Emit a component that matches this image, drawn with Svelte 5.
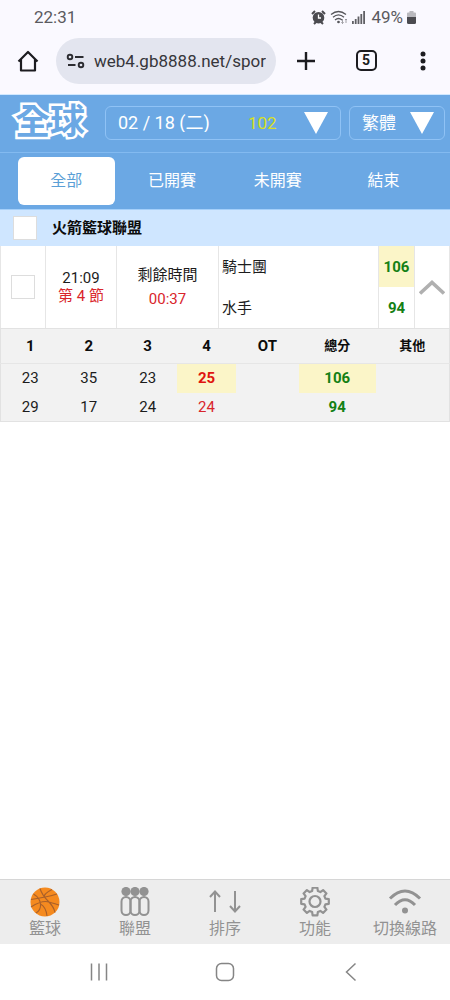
<script>
  let url = 'web4.gb8888.net/sport';
  let fecha = '0218';
  let idioma = 'tw';
  let activeTab = 0;
  let abierto = true;

  const tabs = ['全部', '已開賽', '未開賽', '結束'];

  const headers = ['1', '2', '3', '4', 'OT', '總分', '其他'];
  const widths = [59, 59, 59, 59, 63, 77, 74];

  const rows = [
    { scores: ['23', '35', '23', '25', '', '106', ''], scoring: true },
    { scores: ['29', '17', '24', '24', '', '94', ''], scoring: false }
  ];

  const menu = [
    { icon: 'ball', label: '籃球' },
    { icon: 'league', label: '聯盟' },
    { icon: 'sort', label: '排序' },
    { icon: 'gear', label: '功能' },
    { icon: 'wifi', label: '切換線路' }
  ];

  // Gear outline with eight teeth
  function gearPath(cx, cy, outer, inner) {
    const pts = [];
    for (let i = 0; i < 8; i++) {
      const a = (i * Math.PI) / 4 - Math.PI / 2;
      for (const [off, r] of [[-0.27, inner], [-0.17, outer], [0.17, outer], [0.27, inner]]) {
        pts.push(`${(cx + r * Math.cos(a + off)).toFixed(2)} ${(cy + r * Math.sin(a + off)).toFixed(2)}`);
      }
    }
    return 'M' + pts.join('L') + 'Z';
  }
</script>

<div class="screen">
  <div class="status">
    <span class="clock">22:31</span>
    <div class="status-icons">
      <svg width="15" height="15" viewBox="0 0 15 15">
        <path d="M1 4 4 1M14 4 11 1M3 14l2-2M12 14l-2-2" stroke="#4b4b50" stroke-width="2" />
        <circle cx="7.5" cy="7.7" r="5.8" fill="#4b4b50" />
        <path d="M7.5 4.5V8H10" fill="none" stroke="#fff" stroke-width="1.3" />
      </svg>
      <svg width="18" height="15" viewBox="0 0 18 15" fill="none" stroke="#55555a" stroke-width="1.3">
        <path d="M1 4.5Q8.500-1.500 16 4.500M3 7.300Q8.500 2.500 14 7.300M5 10Q8.500 7 12 10" />
        <circle cx="8.500" cy="12" r=".7" fill="#55555a" />
        <path d="M12.500 9v4.500m-1.200-1.200 1.200 1.200 1.200-1.200M16 13V9m-1 1 1-1 1 1" stroke="#8b8b90" stroke-width=".8" />
      </svg>
      <svg class="signal" width="13" height="13" viewBox="0 0 13 13" fill="#606065">
        <path d="M0 10h1.800v3H0zM2.800 8h1.800v5H2.800zM5.600 5.500h1.800V13H5.600zM8.400 3h1.800v10H8.400zM11.200 0H13v13h-1.800z" />
      </svg>
      <span>49%</span>
      <svg width="9" height="13" viewBox="0 0 9 13">
        <path d="M2.500 0h4v1.500H8q1 0 1 1V6H0V2.500q0-1 1-1h1.500z" fill="#b9b9be" />
        <path d="M0 6h9v5.500q0 1.500-1.500 1.500h-6Q0 13 0 11.500z" fill="#4b4b50" />
      </svg>
    </div>
  </div>

  <div class="browser">
    <button class="home" aria-label="Home">
      <svg width="24" height="24" viewBox="0 0 24 24" fill="none" stroke="#1c1c20" stroke-width="2.200">
        <path d="M2.500 12.500 12 3l9.500 9.500M5 10.500V21.500h14V10.500" stroke-linejoin="round" />
      </svg>
    </button>
    <div class="address">
      <svg width="20" height="16" viewBox="0 0 20 16" fill="none" stroke="#2c2c31" stroke-width="1.900">
        <circle cx="4" cy="4" r="2.300" /><path d="M9 4h8.500M2 12h7.500" /><circle cx="15" cy="12" r="2.300" />
      </svg>
      <input type="text" aria-label="URL" bind:value={url} />
    </div>
    <button class="tool" aria-label="New tab">
      <svg width="20" height="20" viewBox="0 0 20 20" stroke="#1c1c20" stroke-width="2.400"><path d="M1 10h18M10 1v18" /></svg>
    </button>
    <button class="tool"><span class="count">5</span></button>
    <button class="tool last" aria-label="Menu">
      <svg width="6" height="20" viewBox="0 0 6 20" fill="#1c1c20"><circle cx="3" cy="3" r="2.500" /><circle cx="3" cy="10" r="2.500" /><circle cx="3" cy="17" r="2.500" /></svg>
    </button>
  </div>

  <header>
    <div class="top">
      <div class="logo">全球</div>
      <div class="picker date">
        <select aria-label="日期" bind:value={fecha}>
          <option value="0218">02 / 18 (二)</option>
        </select>
        <span class="total">102</span>
        <svg width="24" height="22" viewBox="0 0 24 22"><path d="M0 0h24L12 22z" fill="#fff" /></svg>
      </div>
      <div class="picker lang">
        <select aria-label="語言" bind:value={idioma}>
          <option value="tw">繁體</option>
        </select>
        <svg width="24" height="22" viewBox="0 0 24 22"><path d="M0 0h24L12 22z" fill="#fff" /></svg>
      </div>
    </div>
    <nav class="tabs">
      {#each tabs as tab, i}
        <button class:active={activeTab === i} on:click={() => (activeTab = i)}>{tab}</button>
      {/each}
    </nav>
  </header>

  <main>
    <div class="league">
      <input type="checkbox" id="league" />
      <label for="league">火箭籃球聯盟</label>
    </div>

    <div class="game">
      <div class="cell"><input type="checkbox" aria-label="騎士團 水手" /></div>
      <div class="cell start"><span>21:09</span><span class="red">第 4 節</span></div>
      <div class="cell remain"><span>剩餘時間</span><span class="red">00:37</span></div>
      <div class="cell teams"><span>騎士團</span><span>水手</span></div>
      <div class="cell points"><span class="lead">106</span><span>94</span></div>
      <button class="cell toggle" aria-label="收合" on:click={() => (abierto = !abierto)}>
        <svg width="26" height="15" viewBox="0 0 26 15"><path d="M1 13.500 13 2.500l12 11" fill="none" stroke="#b0b0b0" stroke-width="3.600" /></svg>
      </button>
    </div>

    {#if abierto}
      <table>
        <colgroup>
          {#each widths as w}
            <col style="width: {(w / 450) * 100}%" />
          {/each}
        </colgroup>
        <thead>
          <tr>
            {#each headers as h}
              <th class:zh={h.length > 1 && h !== 'OT'}>{h}</th>
            {/each}
          </tr>
        </thead>
        <tbody>
          {#each rows as row}
            <tr>
              {#each row.scores as s, i}
                <td class:current={i === 3} class:sum={i === 5} class:mark={row.scoring && (i === 3 || i === 5)}>{s}</td>
              {/each}
            </tr>
          {/each}
        </tbody>
      </table>
    {/if}
  </main>

  <footer>
    {#each menu as item}
      <button>
        <svg width="34" height="30" viewBox="0 1 34 30" fill="none" stroke="#929292" stroke-width="2">
          {#if item.icon === 'ball'}
            <circle cx="17" cy="16" r="14.500" fill="#f58a1f" stroke="none" />
            <g stroke="#a9602a" stroke-width="1.100">
              <path d="M12 2.500Q14 9 20 15T27 26.500M3 13.500Q11 12 17 11T29 8M5.500 8Q12 12 12.500 18T8 27M24 3.500Q15 8 16.500 11.500M3 21Q14 14 21 16T31 19M12.500 18Q18 21 19 30" />
            </g>
          {:else if item.icon === 'league'}
            <g fill="#929292" stroke="none"><circle cx="8" cy="5.500" r="4.600" /><circle cx="17" cy="5.500" r="4.600" /><circle cx="26" cy="5.500" r="4.600" /></g>
            <rect x="3.500" y="11" width="9" height="18" rx="4.500" />
            <rect x="12.500" y="11" width="9" height="18" rx="4.500" />
            <rect x="21.500" y="11" width="9" height="18" rx="4.500" />
          {:else if item.icon === 'sort'}
            <path d="M7 26V5.500M2 11l5-5.500L12 11M27 5v20.500M22 20l5 5.500 5-5.500" />
          {:else if item.icon === 'gear'}
            <path d={gearPath(17, 15.5, 14, 10.8)} stroke-width="2.200" stroke-linejoin="round" />
            <circle cx="17" cy="15.500" r="5.500" stroke-width="2.200" />
          {:else}
            <path d="M2 12.500Q17-2.500 32 12.500M7 19Q17 8.500 27 19" stroke-width="3" />
            <circle cx="17" cy="24.500" r="3" fill="#929292" stroke="none" />
          {/if}
        </svg>
        <span>{item.label}</span>
      </button>
    {/each}
  </footer>

  <div class="system">
    <button aria-label="Recents">
      <svg width="20" height="20" viewBox="0 0 20 20" stroke="#858585" stroke-width="1.500"><path d="M2.500 1.500v17M10 1.500v17M17.500 1.500v17" /></svg>
    </button>
    <button aria-label="Home screen">
      <svg width="20" height="20" viewBox="0 0 20 20" fill="none" stroke="#858585" stroke-width="1.500"><rect x="1.500" y="1.500" width="17" height="17" rx="5" /></svg>
    </button>
    <button aria-label="Back">
      <svg width="20" height="20" viewBox="0 0 20 20" fill="none" stroke="#858585" stroke-width="1.500"><path d="M14.500 1.500 5.500 10l9 8.500" /></svg>
    </button>
  </div>
</div>

<style>
  :global(body) {
    background: #fff;
  }

  .screen {
    min-height: 100vh;
    display: flex;
    flex-direction: column;
    font-family: Roboto, "Noto Sans CJK TC", sans-serif;
    font-size: 15px;
    line-height: 18px;
    color: #1c1c1c;
  }

  .screen * {
    box-sizing: border-box;
  }

  svg {
    display: block;
    flex-shrink: 0;
  }

  button,
  input,
  select {
    margin: 0;
    padding: 0;
    border: 0;
    background: none;
    font: inherit;
    color: inherit;
  }

  button {
    display: flex;
    align-items: center;
    justify-content: center;
    cursor: pointer;
  }

  .status {
    display: flex;
    align-items: center;
    justify-content: space-between;
    height: 34px;
    padding: 0 34px;
    background: #faf9ff;
    color: #5a5a60;
    font-size: 17px;
  }

  .status-icons {
    display: flex;
    align-items: center;
    gap: 4px;
  }

  .signal {
    margin-right: 2px;
  }

  .browser {
    display: flex;
    align-items: center;
    height: 61px;
    padding: 0 0 7px;
    background: #faf9ff;
    border-bottom: 1px solid #d0e8ff;
  }

  .home {
    width: 56px;
  }

  .address {
    flex: 1;
    min-width: 0;
    height: 46px;
    display: flex;
    align-items: center;
    gap: 8px;
    padding: 0 10px;
    border-radius: 23px;
    background: #e3e5ef;
    color: #36363b;
    font-size: 17px;
  }

  .address input {
    flex: 1;
    min-width: 0;
  }

  .tool {
    width: 60px;
    height: 46px;
  }

  .tool.last {
    width: 54px;
  }

  .count {
    width: 21px;
    height: 21px;
    border: 2px solid #1c1c20;
    border-radius: 5px;
    font-size: 14px;
    font-weight: 700;
    line-height: 17px;
    text-align: center;
    color: #1c1c20;
  }

  header {
    background: #6ba8e4;
    color: #fff;
    border-bottom: 1px solid #a5d0fa;
  }

  .top {
    display: flex;
    align-items: center;
    gap: 8px;
    height: 58px;
    padding: 0 5px 2px 15px;
    border-bottom: 1px solid #83baf0;
  }

  .logo {
    width: 82px;
    font-size: 35px;
    line-height: 40px;
    font-weight: 700;
    color: #6ba8e4;
    -webkit-text-stroke: 5px #fff;
    paint-order: stroke fill;
    white-space: nowrap;
  }

  .picker {
    display: grid;
    align-items: center;
    height: 34px;
    border: 1px solid #8fc2f5;
    border-radius: 6px;
    font-size: 17px;
  }

  .picker > * {
    grid-row: 1;
  }

  .picker select {
    grid-column: 1 / -1;
    width: 100%;
    height: 32px;
    padding: 0 12px;
    appearance: none;
  }

  .picker option {
    color: #1c1c1c;
  }

  .picker span,
  .picker svg {
    pointer-events: none;
  }

  .date {
    flex: 1;
    grid-template-columns: 1fr 56px 36px;
  }

  .date select {
    font-size: 18px;
  }

  .lang {
    width: 96px;
    grid-template-columns: 1fr 34px;
  }

  .total {
    grid-column: 2;
    color: #d9e021;
  }

  .date svg {
    grid-column: 3;
  }

  .lang svg {
    grid-column: 2;
  }

  .tabs {
    display: grid;
    grid-template-columns: repeat(4, 1fr);
    gap: 9px;
    padding: 4px 18px;
  }

  .tabs button {
    height: 48px;
    border-radius: 6px;
    font-size: 16px;
  }

  .tabs .active {
    background: #fff;
    color: #5b9fd6;
  }

  main {
    flex: 1;
  }

  .league {
    display: flex;
    align-items: center;
    gap: 15px;
    height: 36px;
    padding: 0 13px;
    background: #cfe6ff;
    font-weight: 700;
    color: #0c0c0c;
  }

  input[type='checkbox'] {
    appearance: none;
    width: 24px;
    height: 24px;
    border: 1px solid #ddd;
    background: #fff;
  }

  .game {
    display: grid;
    grid-template-columns: 45px 71px 102px 1fr 36px 35px;
    height: 82px;
    border-left: 1px solid #e6e6e6;
  }

  .cell {
    display: flex;
    flex-direction: column;
    align-items: center;
    justify-content: center;
    border-right: 1px solid #e6e6e6;
  }

  .remain {
    gap: 6px;
  }

  .red,
  .current {
    color: #d9252b;
  }

  .teams {
    align-items: stretch;
    padding-left: 3px;
  }

  .teams span,
  .points span {
    flex: 1;
    display: flex;
    align-items: center;
  }

  .points {
    align-items: stretch;
    font-weight: 700;
    color: #148014;
  }

  .points span {
    justify-content: center;
  }

  .lead,
  .mark {
    background: #fbf5c8;
  }

  table {
    width: 100%;
    table-layout: fixed;
    border-collapse: collapse;
    border: 1px solid #e2e2e2;
    background: #f2f2f2;
    text-align: center;
  }

  th,
  td {
    padding: 0;
    height: 29px;
  }

  th {
    height: 35px;
    border-bottom: 1px solid #e6e6e6;
    color: #0c0c0c;
  }

  .zh {
    font-size: 13px;
  }

  .mark.current {
    color: #e0140f;
    font-weight: 700;
  }

  .sum {
    color: #148014;
    font-weight: 700;
  }

  footer {
    display: grid;
    grid-template-columns: repeat(5, 1fr);
    height: 65px;
    border-top: 1px solid #d6d6d6;
    background: #ededed;
    color: #929292;
    font-size: 16px;
  }

  footer button {
    flex-direction: column;
    gap: 3px;
  }

  .system {
    display: grid;
    grid-template-columns: repeat(3, 1fr);
    height: 56px;
    padding: 0 36px;
  }
</style>
